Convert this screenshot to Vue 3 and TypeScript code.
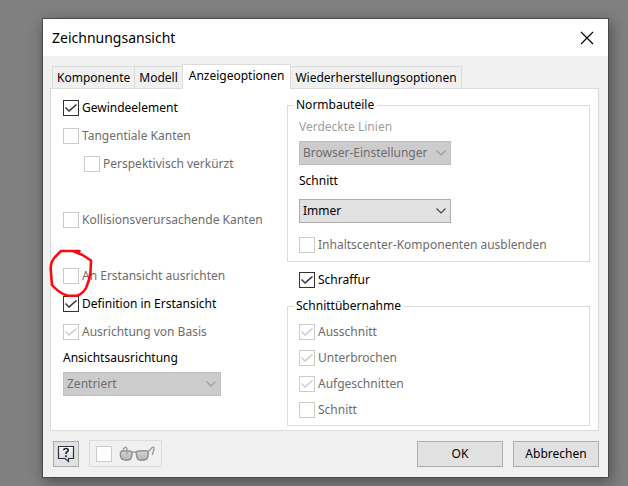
<script setup lang="ts">
import { ref } from 'vue'

interface Option {
  id: string
  label: string
  checked: boolean
  disabled: boolean
  kind?: 'indent' | 'spaced' | 'marked'
}

const tabs = ['Komponente', 'Modell', 'Anzeigeoptionen', 'Wiederherstellungsoptionen']
const activeTab = ref('Anzeigeoptionen')

const viewOptions = ref<Option[]>([
  { id: 'gewinde', label: 'Gewindeelement', checked: true, disabled: false },
  { id: 'tangential', label: 'Tangentiale Kanten', checked: false, disabled: true },
  { id: 'perspektivisch', label: 'Perspektivisch verkürzt', checked: false, disabled: true, kind: 'indent' },
  { id: 'kollision', label: 'Kollisionsverursachende Kanten', checked: false, disabled: true, kind: 'spaced' },
  { id: 'erstansicht', label: 'An Erstansicht ausrichten', checked: false, disabled: true, kind: 'marked' },
  { id: 'definition', label: 'Definition in Erstansicht', checked: true, disabled: false },
  { id: 'basis', label: 'Ausrichtung von Basis', checked: true, disabled: true },
])

const sectionOptions = ref<Option[]>([
  { id: 'ausschnitt', label: 'Ausschnitt', checked: true, disabled: true },
  { id: 'unterbrochen', label: 'Unterbrochen', checked: true, disabled: true },
  { id: 'aufgeschnitten', label: 'Aufgeschnitten', checked: true, disabled: true },
  { id: 'schnittteil', label: 'Schnitt', checked: false, disabled: true },
])

const hideContentCenter = ref(false)
const hatching = ref(true)
const preview = ref(false)
const sectionMode = ref('Immer')
</script>

<template>
  <main class="desktop">
    <section class="dialog" role="dialog" aria-labelledby="dialog-title">
      <header class="titlebar">
        <h1 id="dialog-title">Zeichnungsansicht</h1>
        <button class="close" type="button" aria-label="Schließen">
          <svg width="14" height="14" viewBox="0 0 14 14">
            <path d="M1 1 L13 13 M13 1 L1 13" stroke="#000" stroke-width="1.1" fill="none" />
          </svg>
        </button>
      </header>

      <div class="body">
        <div class="tabs" role="tablist">
          <button
            v-for="tab in tabs"
            :key="tab"
            type="button"
            role="tab"
            class="tab"
            :class="{ active: tab === activeTab }"
            :aria-selected="tab === activeTab"
            @click="activeTab = tab"
          >
            {{ tab }}
          </button>
        </div>

        <div class="panel" role="tabpanel">
          <div class="left">
            <label
              v-for="option in viewOptions"
              :key="option.id"
              class="check"
              :class="[option.kind, { off: option.disabled }]"
            >
              <input v-model="option.checked" type="checkbox" :disabled="option.disabled" />
              <span>{{ option.label }}</span>
              <svg v-if="option.kind === 'marked'" class="marker" width="48" height="52" viewBox="0 0 48 52">
                <path
                  d="M31.5 4 H13 L7 10 Q2.5 15 2.7 22 L4 38 Q11 46 19.5 48.8 H29 Q35 46.5 38 41 Q41.5 33 42.5 25.5 L43 13.5 L34.5 8 L25 4"
                  fill="none"
                  stroke="#fb0b0f"
                  stroke-width="2.6"
                  stroke-linecap="round"
                  stroke-linejoin="round"
                />
              </svg>
            </label>
            <label class="caption" for="alignment">Ansichtsausrichtung</label>
            <div class="combo wide off">
              <select id="alignment" disabled>
                <option>Zentriert</option>
              </select>
              <svg width="10" height="6" viewBox="0 0 10 6"><path d="M0.5 0.5 L5 5 L9.5 0.5" /></svg>
            </div>
          </div>

          <div class="right">
            <fieldset>
              <legend>Normbauteile</legend>
              <label class="caption faded" for="hidden-lines">Verdeckte Linien</label>
              <div class="combo off">
                <select id="hidden-lines" disabled>
                  <option>Browser-Einstellungen</option>
                </select>
                <svg width="10" height="6" viewBox="0 0 10 6"><path d="M0.5 0.5 L5 5 L9.5 0.5" /></svg>
              </div>
              <label class="caption section-caption" for="section">Schnitt</label>
              <div class="combo">
                <select id="section" v-model="sectionMode">
                  <option>Immer</option>
                </select>
                <svg width="10" height="6" viewBox="0 0 10 6"><path d="M0.5 0.5 L5 5 L9.5 0.5" /></svg>
              </div>
              <label class="check content off">
                <input v-model="hideContentCenter" type="checkbox" disabled />
                <span>Inhaltscenter-Komponenten ausblenden</span>
              </label>
            </fieldset>

            <label class="check hatching">
              <input v-model="hatching" type="checkbox" />
              <span>Schraffur</span>
            </label>

            <fieldset class="sections">
              <legend>Schnittübernahme</legend>
              <label v-for="option in sectionOptions" :key="option.id" class="check off">
                <input v-model="option.checked" type="checkbox" :disabled="option.disabled" />
                <span>{{ option.label }}</span>
              </label>
            </fieldset>
          </div>
        </div>

        <footer class="footer">
          <button class="push help" type="button" aria-label="Hilfe">
            <svg width="18" height="18" viewBox="0 0 18 18">
              <defs>
                <linearGradient id="bubble" x1="0" y1="0" x2="0" y2="1">
                  <stop offset="0" stop-color="#fff" />
                  <stop offset="1" stop-color="#cdd0da" />
                </linearGradient>
              </defs>
              <path
                d="M1.5 1.5 H16.5 V13.5 H11.5 V16.5 L8 13.5 H1.5 Z"
                fill="url(#bubble)"
                stroke="#2b3440"
                stroke-width="1.2"
              />
              <path
                d="M6.8 5.2 Q6.9 3.5 9 3.5 Q11.2 3.5 11.2 5.3 Q11.2 6.5 9.9 7.1 Q9 7.6 9 8.9 M9 10.2 V11.9"
                fill="none"
                stroke="#1f2630"
                stroke-width="1.7"
              />
            </svg>
          </button>
          <label class="preview off">
            <input v-model="preview" type="checkbox" disabled aria-label="Vorschau" />
            <svg width="36" height="16" viewBox="0 0 36 16">
              <defs>
                <linearGradient id="lens" x1="0" y1="0" x2="0" y2="1">
                  <stop offset="0" stop-color="#d6d6d6" />
                  <stop offset="1" stop-color="#b4b4b4" />
                </linearGradient>
              </defs>
              <g fill="url(#lens)" stroke="#929292" stroke-width="1.5" stroke-linejoin="round">
                <path d="M2 5.5 Q7 4.2 12.5 5.5 Q13.6 9.5 11.5 13.2 Q7 15.2 3 13.2 Q0.3 9.5 2 5.5 Z" />
                <path d="M17.5 5.5 Q23 4.4 28.8 5 Q29.8 9.5 27.8 13 Q23 15.2 19 13.4 Q16.8 9.5 17.5 5.5 Z" />
              </g>
              <path
                d="M12.5 6.6 Q15 5.4 17.5 6.6 M3 5.5 L5.2 2 Q7.2 0.4 7.8 2.5 V8.5 M28.8 6.4 L32.8 1.8 Q35.3 0 35 3 L33.3 9"
                fill="none"
                stroke="#9c9c9c"
                stroke-width="1.4"
              />
            </svg>
          </label>
          <button class="push action ok" type="button">OK</button>
          <button class="push action" type="button">Abbrechen</button>
        </footer>
      </div>
    </section>
  </main>
</template>

<style>
body {
  background: #808080;
}
</style>

<style scoped>
.desktop {
  box-sizing: border-box;
  min-height: 100vh;
  padding: 18px 19px 8px 42px;
  font: 12px/20px 'Noto Sans', 'Open Sans', sans-serif;
  color: #000;
}

.dialog {
  border: 1px solid #484b49;
  background: #f0f0f0;
  box-shadow: 2px 4px 14px rgba(0, 0, 0, 0.4);
}

.titlebar {
  display: flex;
  align-items: center;
  justify-content: space-between;
  height: 37px;
  padding: 0 14px 0 9px;
  background: #fff;
}

h1 {
  margin: 0;
  font-size: 14px;
  font-weight: 400;
}

button {
  font: inherit;
  color: inherit;
}

.close {
  display: flex;
  padding: 0;
  border: 0;
  background: none;
}

.body {
  padding: 8px 9px 10px 7px;
}

.tabs {
  display: flex;
  align-items: flex-end;
  padding-left: 2px;
}

.tab {
  height: 22px;
  padding: 0 4px;
  border: 1px solid #dcdcdc;
  border-bottom: 0;
  border-left-width: 0;
  background: #f0f0f0;
}

.tab:first-child {
  border-left-width: 1px;
}

.tab.active {
  z-index: 1;
  height: 25px;
  margin: 0 0 -1px -1px;
  padding: 0 6px 2px;
  border-left-width: 1px;
  background: #fff;
}

.panel {
  display: grid;
  grid-template-columns: 224px 1fr;
  padding: 5px 8px 4px 12px;
  border: 1px solid #dcdcdc;
  background: #fff;
}

.left,
.right {
  display: flex;
  flex-direction: column;
  min-width: 0;
}

.right {
  padding-top: 1px;
}

.check {
  position: relative;
  display: flex;
  align-items: center;
  gap: 3px;
  height: 28px;
  white-space: nowrap;
}

.check.off {
  color: #6d6d6d;
}

.indent {
  margin-left: 21px;
}

.spaced,
.marked {
  margin-top: 28px;
}

.marker {
  position: absolute;
  top: -15px;
  left: -15px;
  z-index: 1;
  pointer-events: none;
}

input {
  flex: none;
  box-sizing: border-box;
  width: 16px;
  height: 16px;
  margin: 0;
  border: 1px solid #333;
  background: #fff;
  appearance: none;
}

input:checked::before {
  content: '';
  display: block;
  width: 14px;
  height: 14px;
  background: #333;
  clip-path: polygon(1px 7px, 2px 6px, 5px 9px, 12px 3px, 13px 4px, 5px 11px);
}

.off input {
  border-color: #ccc;
}

.off input:checked::before {
  background: #ccc;
}

.caption {
  height: 20px;
}

.faded {
  color: #a0a0a0;
}

.left > .caption {
  margin: 2px 0 4px;
}

.combo {
  position: relative;
  display: flex;
  width: 152px;
}

.combo.wide {
  width: 158px;
}

.combo select {
  box-sizing: border-box;
  width: 100%;
  height: 24px;
  padding: 0 23px 0 3px;
  border: 1px solid #adadad;
  border-radius: 0;
  background: #e1e1e1;
  color: #000;
  font: inherit;
  opacity: 1;
  appearance: none;
}

.combo.off select {
  border-color: #bfbfbf;
  background: #ccc;
  color: #6d6d6d;
}

.combo svg {
  position: absolute;
  top: 9px;
  right: 5px;
  fill: none;
  stroke: #444;
  stroke-width: 1.1;
  pointer-events: none;
}

.combo.off svg {
  stroke: #9c9c9c;
}

fieldset {
  display: flex;
  flex-direction: column;
  min-width: 0;
  margin: 0;
  padding: 2px 11px;
  border: 1px solid #dcdcdc;
}

legend {
  height: 20px;
  margin-left: -5px;
  padding: 0 3px 0 2px;
}

fieldset .caption {
  margin-bottom: 4px;
}

fieldset .section-caption {
  margin: 6px 0 8px;
}

.content {
  margin-top: 8px;
}

.hatching {
  margin: 4px 0 2px 12px;
}

.sections {
  padding-top: 3px;
}

.sections .check {
  height: 26px;
}

.footer {
  display: flex;
  align-items: center;
  gap: 10px;
  margin-top: 9px;
}

.push {
  box-sizing: border-box;
  height: 26px;
  padding: 0;
  border: 1px solid #adadad;
  background: #e1e1e1;
}

.help {
  display: flex;
  align-items: center;
  justify-content: center;
  width: 26px;
  margin-left: 3px;
}

.preview {
  box-sizing: border-box;
  display: flex;
  align-items: center;
  gap: 7px;
  height: 27px;
  padding: 0 6px;
  border: 1px solid #dcdcdc;
}

.action {
  width: 86px;
}

.ok {
  margin-left: auto;
}
</style>
